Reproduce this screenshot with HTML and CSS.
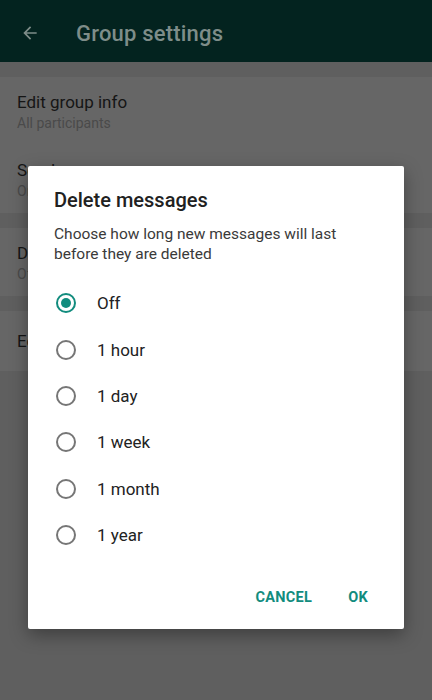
FILE: index.html
```html
<!DOCTYPE html>
<html lang="en">
<head>
  <meta charset="UTF-8" />
  <meta name="viewport" content="width=device-width, initial-scale=1.0"/>
  <title>Group settings</title>
  <link rel="stylesheet" href="styles.css">
</head>
<body>
  <header class="appbar">
    <svg class="back" width="20" height="20" viewBox="0 0 24 24">
      <path d="M20 11H7.8l5.6-5.6L12 4l-8 8 8 8 1.4-1.4L7.8 13H20z" fill="currentColor"/>
    </svg>
    <h1>Group settings</h1>
  </header>

  <main class="settings">
    <section class="group">
      <div class="item">
        <div class="item-title">Edit group info</div>
        <div class="item-sub">All participants</div>
      </div>
      <div class="item">
        <div class="item-title">Send messages</div>
        <div class="item-sub">Only admins</div>
      </div>
    </section>
    <section class="group">
      <div class="item">
        <div class="item-title">Disappearing messages</div>
        <div class="item-sub">Off</div>
      </div>
    </section>
    <section class="group">
      <div class="item single">
        <div class="item-title">Edit group admins</div>
      </div>
    </section>
  </main>

  <div class="dialog">
    <h2>Delete messages</h2>
    <p class="desc">Choose how long new messages will last before they are deleted</p>
    <ul class="options">
      <li class="option checked"><span class="radio"></span>Off</li>
      <li class="option"><span class="radio"></span>1 hour</li>
      <li class="option"><span class="radio"></span>1 day</li>
      <li class="option"><span class="radio"></span>1 week</li>
      <li class="option"><span class="radio"></span>1 month</li>
      <li class="option"><span class="radio"></span>1 year</li>
    </ul>
    <div class="actions">
      <button>CANCEL</button>
      <button>OK</button>
    </div>
  </div>
</body>
</html>
```

FILE: styles.css
```css
body {
  margin: 0;
  padding: 0;
  font-family: Roboto, "Noto Sans", sans-serif;
  background-color: #5f5f5f;
  height: 700px;
  overflow: hidden;
  position: relative;
}

.appbar {
  height: 62px;
  background-color: #03231f;
  display: flex;
  align-items: center;
  padding: 4px 0 0 20px;
  box-sizing: border-box;
}

.back {
  color: #7e8d89;
}

.appbar h1 {
  margin: 0 0 0 36px;
  font-size: 22px;
  font-weight: 500;
  letter-spacing: 0.2px;
  color: #7e8d89;
}

.settings {
  padding-top: 15px;
}

.group {
  background-color: #666666;
  margin-bottom: 15px;
}

.item {
  height: 68px;
  padding: 0 17px;
  display: flex;
  flex-direction: column;
  justify-content: center;
}

.item.single {
  height: 60px;
}

.item-title {
  font-size: 17px;
  color: #151515;
}

.item-sub {
  font-size: 14px;
  color: #4a4a4a;
  margin-top: 3px;
}

.dialog {
  position: absolute;
  left: 28px;
  top: 166px;
  width: 376px;
  height: 463px;
  box-sizing: border-box;
  background-color: #ffffff;
  border-radius: 2px;
  box-shadow: 0 6px 18px rgba(0, 0, 0, 0.35);
  padding: 22px 26px 0 26px;
}

.dialog h2 {
  margin: 0;
  font-size: 20px;
  font-weight: 500;
  color: #212121;
  line-height: 24px;
}

.desc {
  margin: 12px 0 0 0;
  font-size: 15.5px;
  line-height: 20px;
  color: #3a3a3a;
}

.options {
  list-style: none;
  margin: 16px 0 0 0;
  padding: 0;
}

.option {
  height: 46.4px;
  display: flex;
  align-items: center;
  font-size: 17px;
  color: #222;
}

.radio {
  width: 16px;
  height: 16px;
  border: 2px solid #767676;
  border-radius: 50%;
  margin: 0 21px 0 2px;
  box-sizing: content-box;
  position: relative;
}

.option.checked .radio {
  border-color: #128c7e;
}

.option.checked .radio::after {
  content: "";
  position: absolute;
  left: 3px;
  top: 3px;
  width: 10px;
  height: 10px;
  border-radius: 50%;
  background-color: #128c7e;
}

.actions {
  display: flex;
  justify-content: flex-end;
  margin-top: 23px;
}

.actions button {
  background: none;
  border: none;
  font-family: Roboto, "Noto Sans", sans-serif;
  font-size: 14.5px;
  font-weight: 700;
  letter-spacing: 0.3px;
  color: #128c7e;
  padding: 8px 10px;
  margin-left: 16px;
}
```
